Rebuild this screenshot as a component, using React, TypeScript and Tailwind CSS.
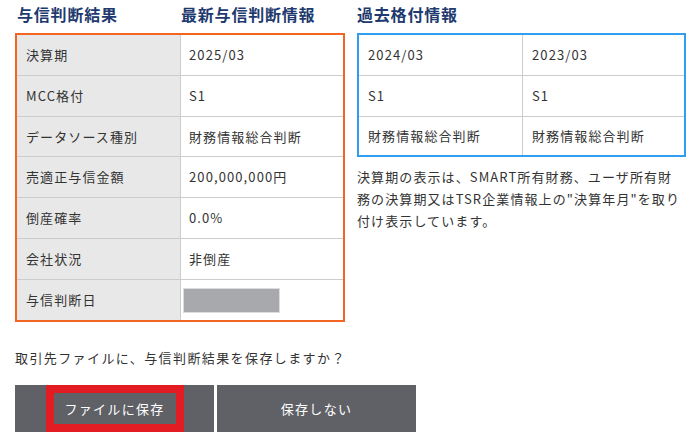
import React from "react";

const font = { fontFamily: '"Noto Sans CJK JP", "Noto Sans", sans-serif' };

const leftRows: { label: string; value: React.ReactNode; h: string }[] = [
  { label: "決算期", value: "2025/03", h: "h-[41px]" },
  { label: "MCC格付", value: "S1", h: "h-[41px]" },
  { label: "データソース種別", value: "財務情報総合判断", h: "h-[40px]" },
  { label: "売適正与信金額", value: "200,000,000円", h: "h-[41px]" },
  { label: "倒産確率", value: "0.0%", h: "h-[41px]" },
  { label: "会社状況", value: "非倒産", h: "h-[41px]" },
  { label: "与信判断日", value: null, h: "h-[40px]" },
];

const rightRows: { a: string; b: string; h: string }[] = [
  { a: "2024/03", b: "2023/03", h: "h-[41px]" },
  { a: "S1", b: "S1", h: "h-[41px]" },
  { a: "財務情報総合判断", b: "財務情報総合判断", h: "h-[38px]" },
];

export default function App() {
  return (
    <div className="w-[697px] h-[439px] bg-white text-[#333333] overflow-hidden" style={font}>
      <div className="flex pl-[15px] gap-[12px]">
        {/* Left section */}
        <div className="w-[330px] flex flex-col">
          <div className="h-[33px] flex items-start pt-[2px] text-[16px] leading-[24px] font-bold text-[#1e3a6e] tracking-[0.8px]">
            <div className="w-[166px] pl-[2px]">与信判断結果</div>
            <div>最新与信判断情報</div>
          </div>
          <div className="border-2 border-[#f26522] flex flex-col">
            {leftRows.map((r, i) => (
              <div
                key={r.label}
                className={`flex ${r.h} ${i < leftRows.length - 1 ? "border-b border-[#cccccc]" : ""}`}
              >
                <div className="w-[164px] shrink-0 bg-[#e8e8e8] border-r border-[#cccccc] flex items-center pl-[9px] text-[13px] tracking-[1.1px] text-[#333333]">
                  {r.label}
                </div>
                <div className="flex-1 flex items-center pl-[8px] text-[13px] tracking-[1.1px] text-[#333333]">
                  {r.value === null ? (
                    <div className="-ml-[6px] w-[97px] h-[25px] bg-[#a8a9ac] border border-[#dddddd]" />
                  ) : (
                    r.value
                  )}
                </div>
              </div>
            ))}
          </div>
        </div>

        {/* Right section */}
        <div className="w-[329px] flex flex-col">
          <div className="h-[33px] pt-[2px] text-[16px] leading-[24px] font-bold text-[#1e3a6e] tracking-[0.8px]">
            過去格付情報
          </div>
          <div className="border-2 border-[#2e9ef0] flex flex-col">
            {rightRows.map((r, i) => (
              <div
                key={i}
                className={`flex ${r.h} ${i < rightRows.length - 1 ? "border-b border-[#cccccc]" : ""}`}
              >
                <div className="w-[164px] shrink-0 border-r border-[#cccccc] flex items-center pl-[9px] text-[13px] tracking-[1.1px]">
                  {r.a}
                </div>
                <div className="flex-1 flex items-center pl-[9px] text-[13px] tracking-[1.1px]">
                  {r.b}
                </div>
              </div>
            ))}
          </div>
          <p className="mt-[9px] text-[13px] leading-[22px] tracking-[1.1px] whitespace-nowrap text-[#333333]">
            決算期の表示は、SMART所有財務、ユーザ所有財
            <br />
            務の決算期又はTSR企業情報上の"決算年月"を取り
            <br />
            付け表示しています。
          </p>
        </div>
      </div>

      <div className="pl-[15px] mt-[26px] text-[13px] leading-[20px] tracking-[1.4px] text-[#333333]">
        取引先ファイルに、与信判断結果を保存しますか？
      </div>

      <div className="pl-[15px] mt-[17px] flex gap-[3px]">
        <button className="w-[199px] h-[47px] bg-[#5f6166] flex items-center justify-center">
          <span className="w-[138px] h-[47px] border-[8px] border-[#e31b23] flex items-center justify-center text-white text-[13px] tracking-[1.3px]">
            ファイルに保存
          </span>
        </button>
        <button className="w-[199px] h-[47px] bg-[#5f6166] flex items-center justify-center text-white text-[13px] tracking-[1.3px]">
          保存しない
        </button>
      </div>
    </div>
  );
}
